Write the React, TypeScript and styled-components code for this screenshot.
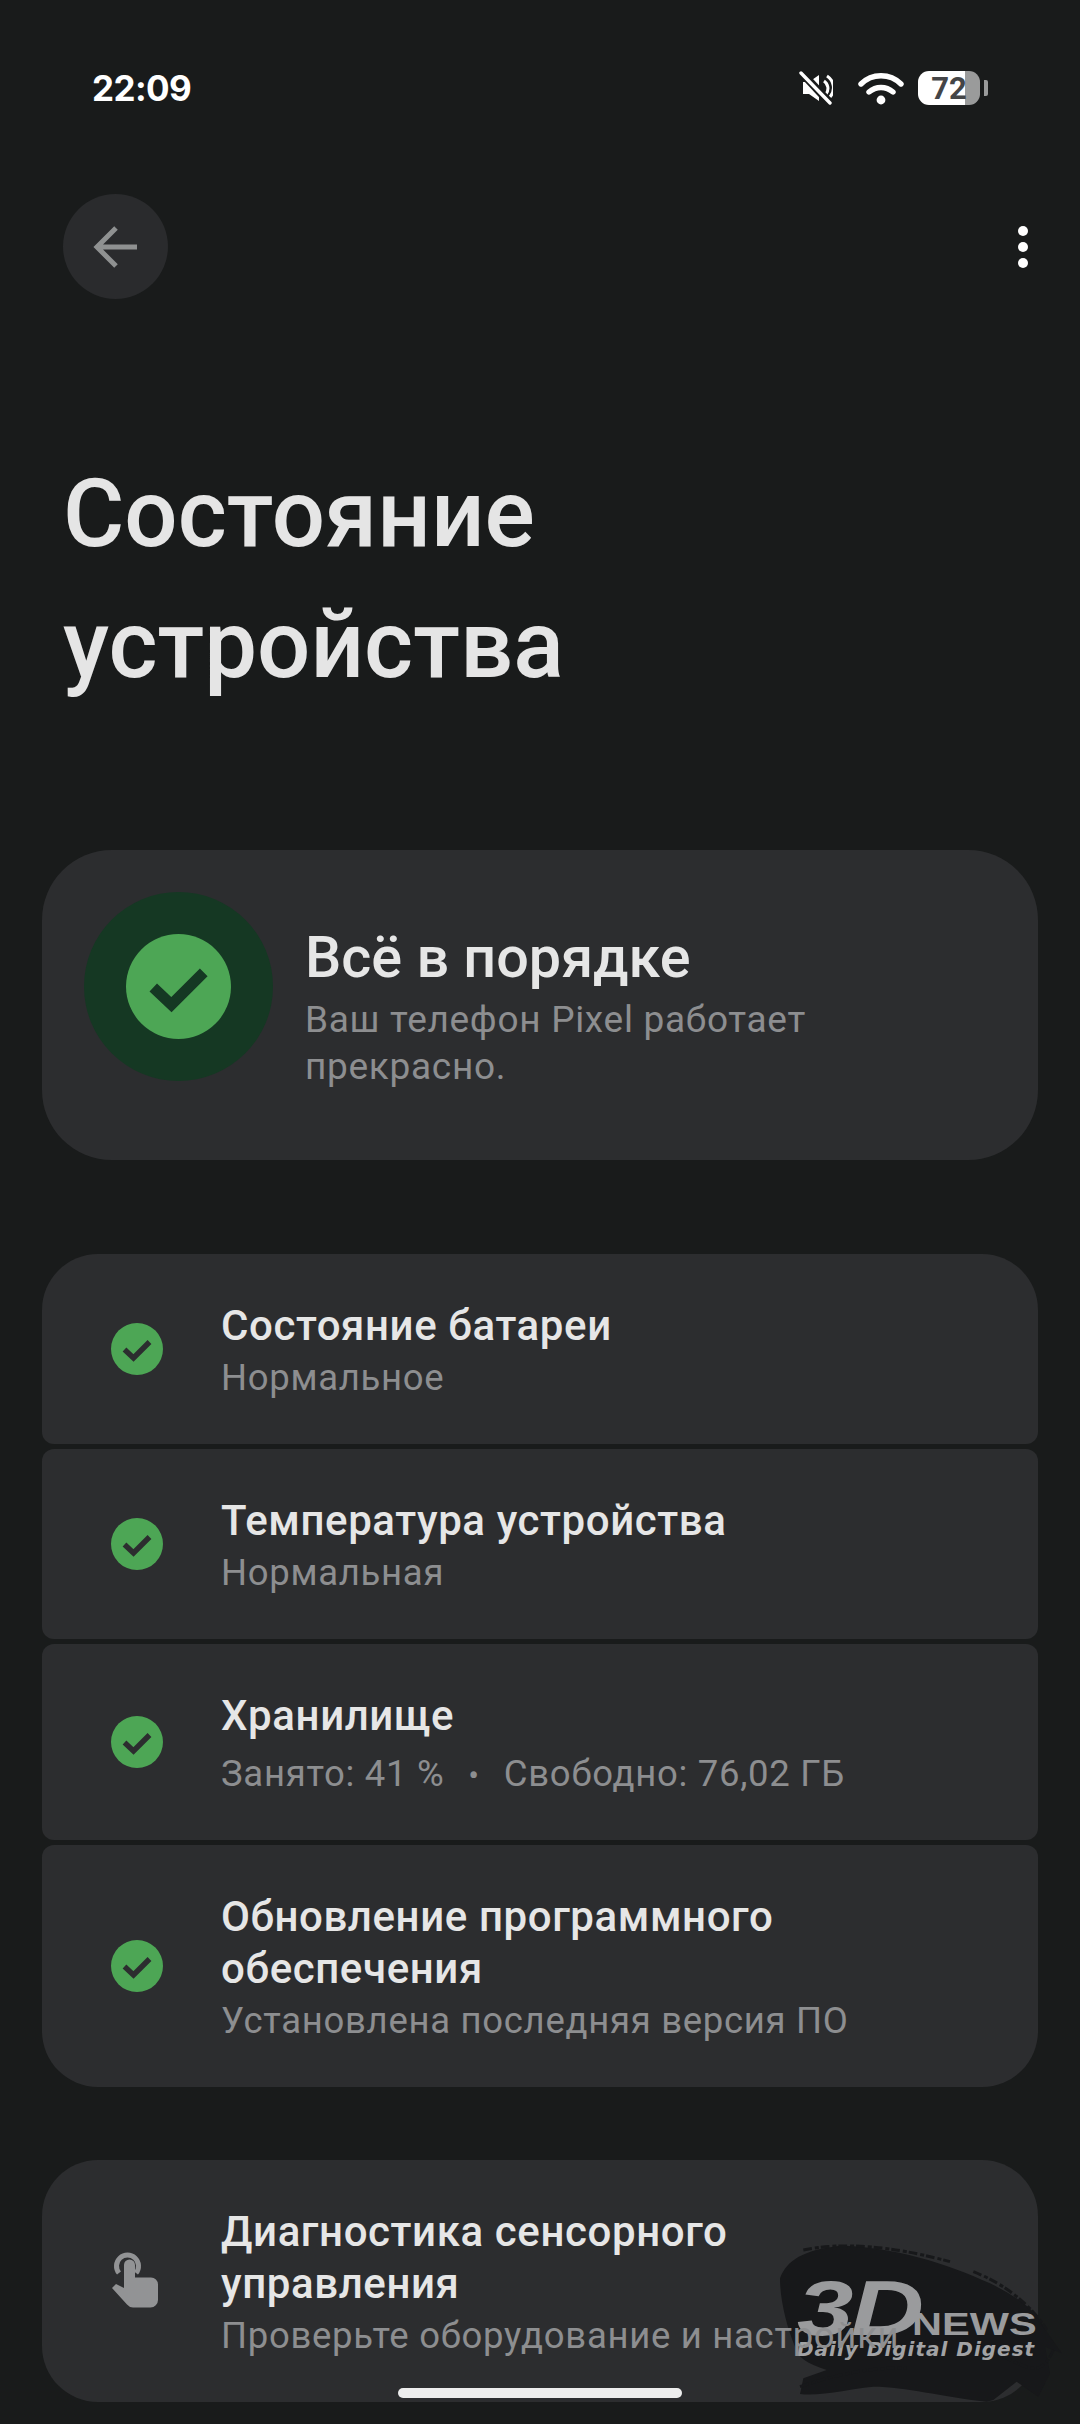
import React from "react";
import styled, { createGlobalStyle } from "styled-components";

const Global = createGlobalStyle`
  html, body { margin: 0; padding: 0; background: #191b1b; }
  * { box-sizing: border-box; }
`;

const Page = styled.div`
  position: relative;
  width: 1080px;
  height: 2424px;
  overflow: hidden;
  background: #191b1b;
  font-family: Roboto, "Noto Sans", sans-serif;
  -webkit-font-smoothing: antialiased;
`;

const StatusBar = styled.div`
  display: flex;
  align-items: center;
  justify-content: space-between;
  height: 44px;
  margin-top: 66px;
  padding: 0 92px;
`;

const Clock = styled.span`
  font-family: Inter, Roboto, sans-serif;
  font-size: 35px;
  font-weight: 700;
  letter-spacing: -0.6px;
  color: #fff;
`;

const StatusIcons = styled.div`
  display: flex;
  align-items: center;
`;

const Battery = styled.div`
  position: relative;
  display: flex;
  align-items: center;
  justify-content: center;
  width: 62px;
  height: 34px;
  margin-left: 14px;
  margin-right: 8px;
  border-radius: 11px;
  background: linear-gradient(90deg, #fff 0 47px, #9a9b9b 47px);
  font-family: Roboto, sans-serif;
  font-size: 31px;
  font-weight: 700;
  color: #444547;
  &::after {
    content: "";
    position: absolute;
    left: 66px;
    top: 9px;
    width: 4px;
    height: 16px;
    border-radius: 0 2px 2px 0;
    background: #9a9b9b;
  }
`;

const MuteIcon = styled.svg`
  margin-right: 25px;
`;

const AppBar = styled.div`
  display: flex;
  align-items: center;
  justify-content: space-between;
  margin-top: 84px;
  padding: 0 52px 0 63px;
`;

const BackButton = styled.div`
  display: flex;
  align-items: center;
  justify-content: center;
  width: 105px;
  height: 105px;
  border-radius: 50%;
  background: #2a2b2d;
`;

const MoreButton = styled.div`
  display: flex;
  flex-direction: column;
  gap: 6px;
`;

const Dot = styled.span`
  width: 10px;
  height: 10px;
  border-radius: 50%;
  background: #fff;
`;

const Title = styled.h1`
  margin: 150px 0 0;
  padding: 0 63px;
  font-size: 94px;
  font-weight: 500;
  letter-spacing: 0;
  line-height: 131px;
  color: #e5e5e5;
`;

const Content = styled.div`
  display: flex;
  flex-direction: column;
  margin-top: 139px;
  padding: 0 42px;
`;

const Hero = styled.section`
  display: flex;
  align-items: center;
  gap: 32px;
  height: 310px;
  padding-left: 42px;
  border-radius: 70px;
  background: #2c2d2f;
`;

const HeroHalo = styled.div`
  display: flex;
  flex: none;
  align-self: flex-start;
  align-items: center;
  justify-content: center;
  width: 189px;
  height: 189px;
  margin-top: 42px;
  border-radius: 50%;
  background: #153823;
`;

const HeroText = styled.div`
  display: flex;
  flex-direction: column;
`;

const HeroTitle = styled.div`
  font-size: 57.5px;
  font-weight: 500;
  line-height: 76px;
  color: #e6e6e6;
`;

const HeroSub = styled.div`
  font-size: 37px;
  line-height: 47px;
  letter-spacing: 0.7px;
  color: #8d8e90;
`;

const List = styled.section<{ $top: number }>`
  display: flex;
  flex-direction: column;
  gap: 5px;
  margin-top: ${(p) => p.$top}px;
`;

const Row = styled.div<{ $first?: boolean; $last?: boolean }>`
  display: flex;
  align-items: center;
  gap: 58px;
  padding: 43px 40px 43px 69px;
  border-radius: ${(p) => (p.$first ? "56px" : "12px")} ${(p) => (p.$first ? "56px" : "12px")}
    ${(p) => (p.$last ? "56px" : "12px")} ${(p) => (p.$last ? "56px" : "12px")};
  background: #2c2d2f;
`;

const RowIcon = styled.div`
  display: flex;
  flex: none;
  align-items: center;
  justify-content: center;
  width: 52px;
  height: 52px;
`;

const RowText = styled.div`
  position: relative;
  z-index: 2;
  display: flex;
  flex-direction: column;
  min-width: 0;
  margin: 3px 0 -3px;
`;

const RowTitle = styled.div`
  font-size: 42px;
  font-weight: 500;
  letter-spacing: 0.6px;
  line-height: 52px;
  color: #e6e6e6;
`;

const RowSub = styled.div<{ $tall?: boolean }>`
  padding-top: ${(p) => (p.$tall ? 7 : 0)}px;
  font-size: 36.5px;
  line-height: ${(p) => (p.$tall ? 49 : 52)}px;
  letter-spacing: 0.7px;
  white-space: nowrap;
  color: #8d8e90;
`;

const Separator = styled.span`
  margin: 0 24px;
  font-size: 32px;
`;

const Watermark = styled.div`
  position: absolute;
  z-index: 1;
  left: 780px;
  top: 2244px;
  width: 300px;
  height: 160px;
`;

const Mark3D = styled.span`
  position: absolute;
  left: 17px;
  top: 25px;
  font-family: "Liberation Sans", sans-serif;
  font-size: 78px;
  font-weight: 700;
  font-style: italic;
  line-height: 78px;
  letter-spacing: -2px;
  color: #9a9b9d;
  transform: scaleX(1.3);
  transform-origin: left center;
`;

const MarkNews = styled.span`
  position: absolute;
  left: 132px;
  top: 65px;
  font-family: "Liberation Sans", sans-serif;
  font-size: 31px;
  font-weight: 700;
  line-height: 31px;
  color: #9a9b9d;
  transform: scaleX(1.34);
  transform-origin: left center;
`;

const MarkTag = styled.span`
  position: absolute;
  left: 17px;
  top: 93px;
  font-family: "DejaVu Sans", sans-serif;
  font-size: 20px;
  font-weight: 700;
  font-style: italic;
  letter-spacing: 1px;
  line-height: 24px;
  white-space: nowrap;
  color: #a2a3a5;
`;

const HomeIndicator = styled.div`
  position: absolute;
  z-index: 3;
  left: 398px;
  top: 2388px;
  width: 284px;
  height: 10px;
  border-radius: 5px;
  background: #ededed;
`;

const Check = ({ size, mark, disc }: { size: number; mark: string; disc: string }) => (
  <svg width={size} height={size} viewBox="0 0 52 52">
    <circle cx="26" cy="26" r="26" fill={disc} />
    <path d="M13.5 26.5 L22.5 35 L38.5 19" fill="none" stroke={mark} strokeWidth="5.4" />
  </svg>
);

const rows = [
  { title: "Состояние батареи", sub: "Нормальное" },
  { title: "Температура устройства", sub: "Нормальная" },
];

export default function App() {
  return (
    <Page>
      <Global />
      <StatusBar>
        <Clock>22:09</Clock>
        <StatusIcons>
          <MuteIcon width="34" height="34" viewBox="0 0 34 34">
            <path d="M4 11 h6 l10 -7 v26 l-10 -7 h-6 z" fill="#fff" />
            <path d="M25 10 a9 9 0 0 1 2 13 M28 5 a14 14 0 0 1 3 21" fill="none" stroke="#fff" strokeWidth="3" />
            <path d="M2 1 L31 32" stroke="#191b1b" strokeWidth="8" />
            <path d="M2 2 L31 32" stroke="#fff" strokeWidth="3.4" strokeLinecap="round" />
          </MuteIcon>
          <svg width="46" height="34" viewBox="0 0 46 34">
            <path d="M3 13 C14 2 32 2 43 13 M11 21 C18 15 28 15 35 21" fill="none" stroke="#fff" strokeWidth="5.4" strokeLinecap="round" />
            <circle cx="23" cy="29" r="4.4" fill="#fff" />
          </svg>
          <Battery>72</Battery>
        </StatusIcons>
      </StatusBar>

      <AppBar>
        <BackButton>
          <svg width="46" height="46" viewBox="0 0 46 46">
            <path d="M44 23 H6 M23 4 L4 23 L23 42" fill="none" stroke="#8f9191" strokeWidth="5" />
          </svg>
        </BackButton>
        <MoreButton>
          <Dot />
          <Dot />
          <Dot />
        </MoreButton>
      </AppBar>

      <Title>
        Состояние
        <br />
        устройства
      </Title>

      <Content>
        <Hero>
          <HeroHalo>
            <Check size={105} mark="#153823" disc="#4da655" />
          </HeroHalo>
          <HeroText>
            <HeroTitle>Всё в порядке</HeroTitle>
            <HeroSub>
              Ваш телефон Pixel работает
              <br />
              прекрасно.
            </HeroSub>
          </HeroText>
        </Hero>

        <List $top={94}>
          {rows.map((r, i) => (
            <Row key={r.sub} $first={i === 0}>
              <RowIcon>
                <Check size={52} mark="#2c2d2f" disc="#4da655" />
              </RowIcon>
              <RowText>
                <RowTitle>{r.title}</RowTitle>
                <RowSub>{r.sub}</RowSub>
              </RowText>
            </Row>
          ))}
          <Row>
            <RowIcon>
              <Check size={52} mark="#2c2d2f" disc="#4da655" />
            </RowIcon>
            <RowText>
              <RowTitle>Хранилище</RowTitle>
              <RowSub $tall>
                Занято: 41 %<Separator>•</Separator>Свободно: 76,02 ГБ
              </RowSub>
            </RowText>
          </Row>
          <Row $last>
            <RowIcon>
              <Check size={52} mark="#2c2d2f" disc="#4da655" />
            </RowIcon>
            <RowText>
              <RowTitle>
                Обновление программного
                <br />
                обеспечения
              </RowTitle>
              <RowSub>Установлена последняя версия ПО</RowSub>
            </RowText>
          </Row>
        </List>

        <List $top={73}>
          <Row $first $last>
            <RowIcon>
              <svg width="52" height="60" viewBox="0 0 52 60">
                <path d="M8 22 a11 11 0 1 1 17 0" fill="none" stroke="#929395" strokeWidth="5" />
                <path
                  d="M13 14 a5.5 5.5 0 0 1 11 0 V26.5 H40 a7 7 0 0 1 7 7 V49 a7.5 7.5 0 0 1 -7.5 7.5 H22 a8 8 0 0 1 -6 -3 L1 37 L5 33 L13 37 Z"
                  fill="#929395"
                />
              </svg>
            </RowIcon>
            <RowText>
              <RowTitle>
                Диагностика сенсорного
                <br />
                управления
              </RowTitle>
              <RowSub>Проверьте оборудование и настройки</RowSub>
            </RowText>
          </Row>
        </List>
      </Content>

      <Watermark>
        <svg width="300" height="160" viewBox="420 132 900 480">
          <path
            d="M420 235 C440 180 490 150 600 137 C760 140 920 190 1050 250 C1130 290 1190 330 1210 380 L1265 460 L1215 440 L1230 520 L1195 590 L1130 545 L1060 600 L1040 605 C900 590 800 560 700 560 C640 565 540 590 480 582 L490 535 L560 510 C500 490 470 470 465 440 C440 380 420 300 420 235 Z"
            fill="#17181a"
          />
          <path
            d="M490 150 C640 120 800 150 930 185 M1000 215 C1090 250 1170 310 1220 390 M1090 470 C1160 500 1200 540 1240 450 M480 560 C600 520 700 500 800 505"
            fill="none"
            stroke="#17181a"
            strokeWidth="9"
            strokeDasharray="26 9 12 6"
          />
        </svg>
        <Mark3D>3D</Mark3D>
        <MarkNews>NEWS</MarkNews>
        <MarkTag>Daily Digital Digest</MarkTag>
      </Watermark>

      <HomeIndicator />
    </Page>
  );
}
